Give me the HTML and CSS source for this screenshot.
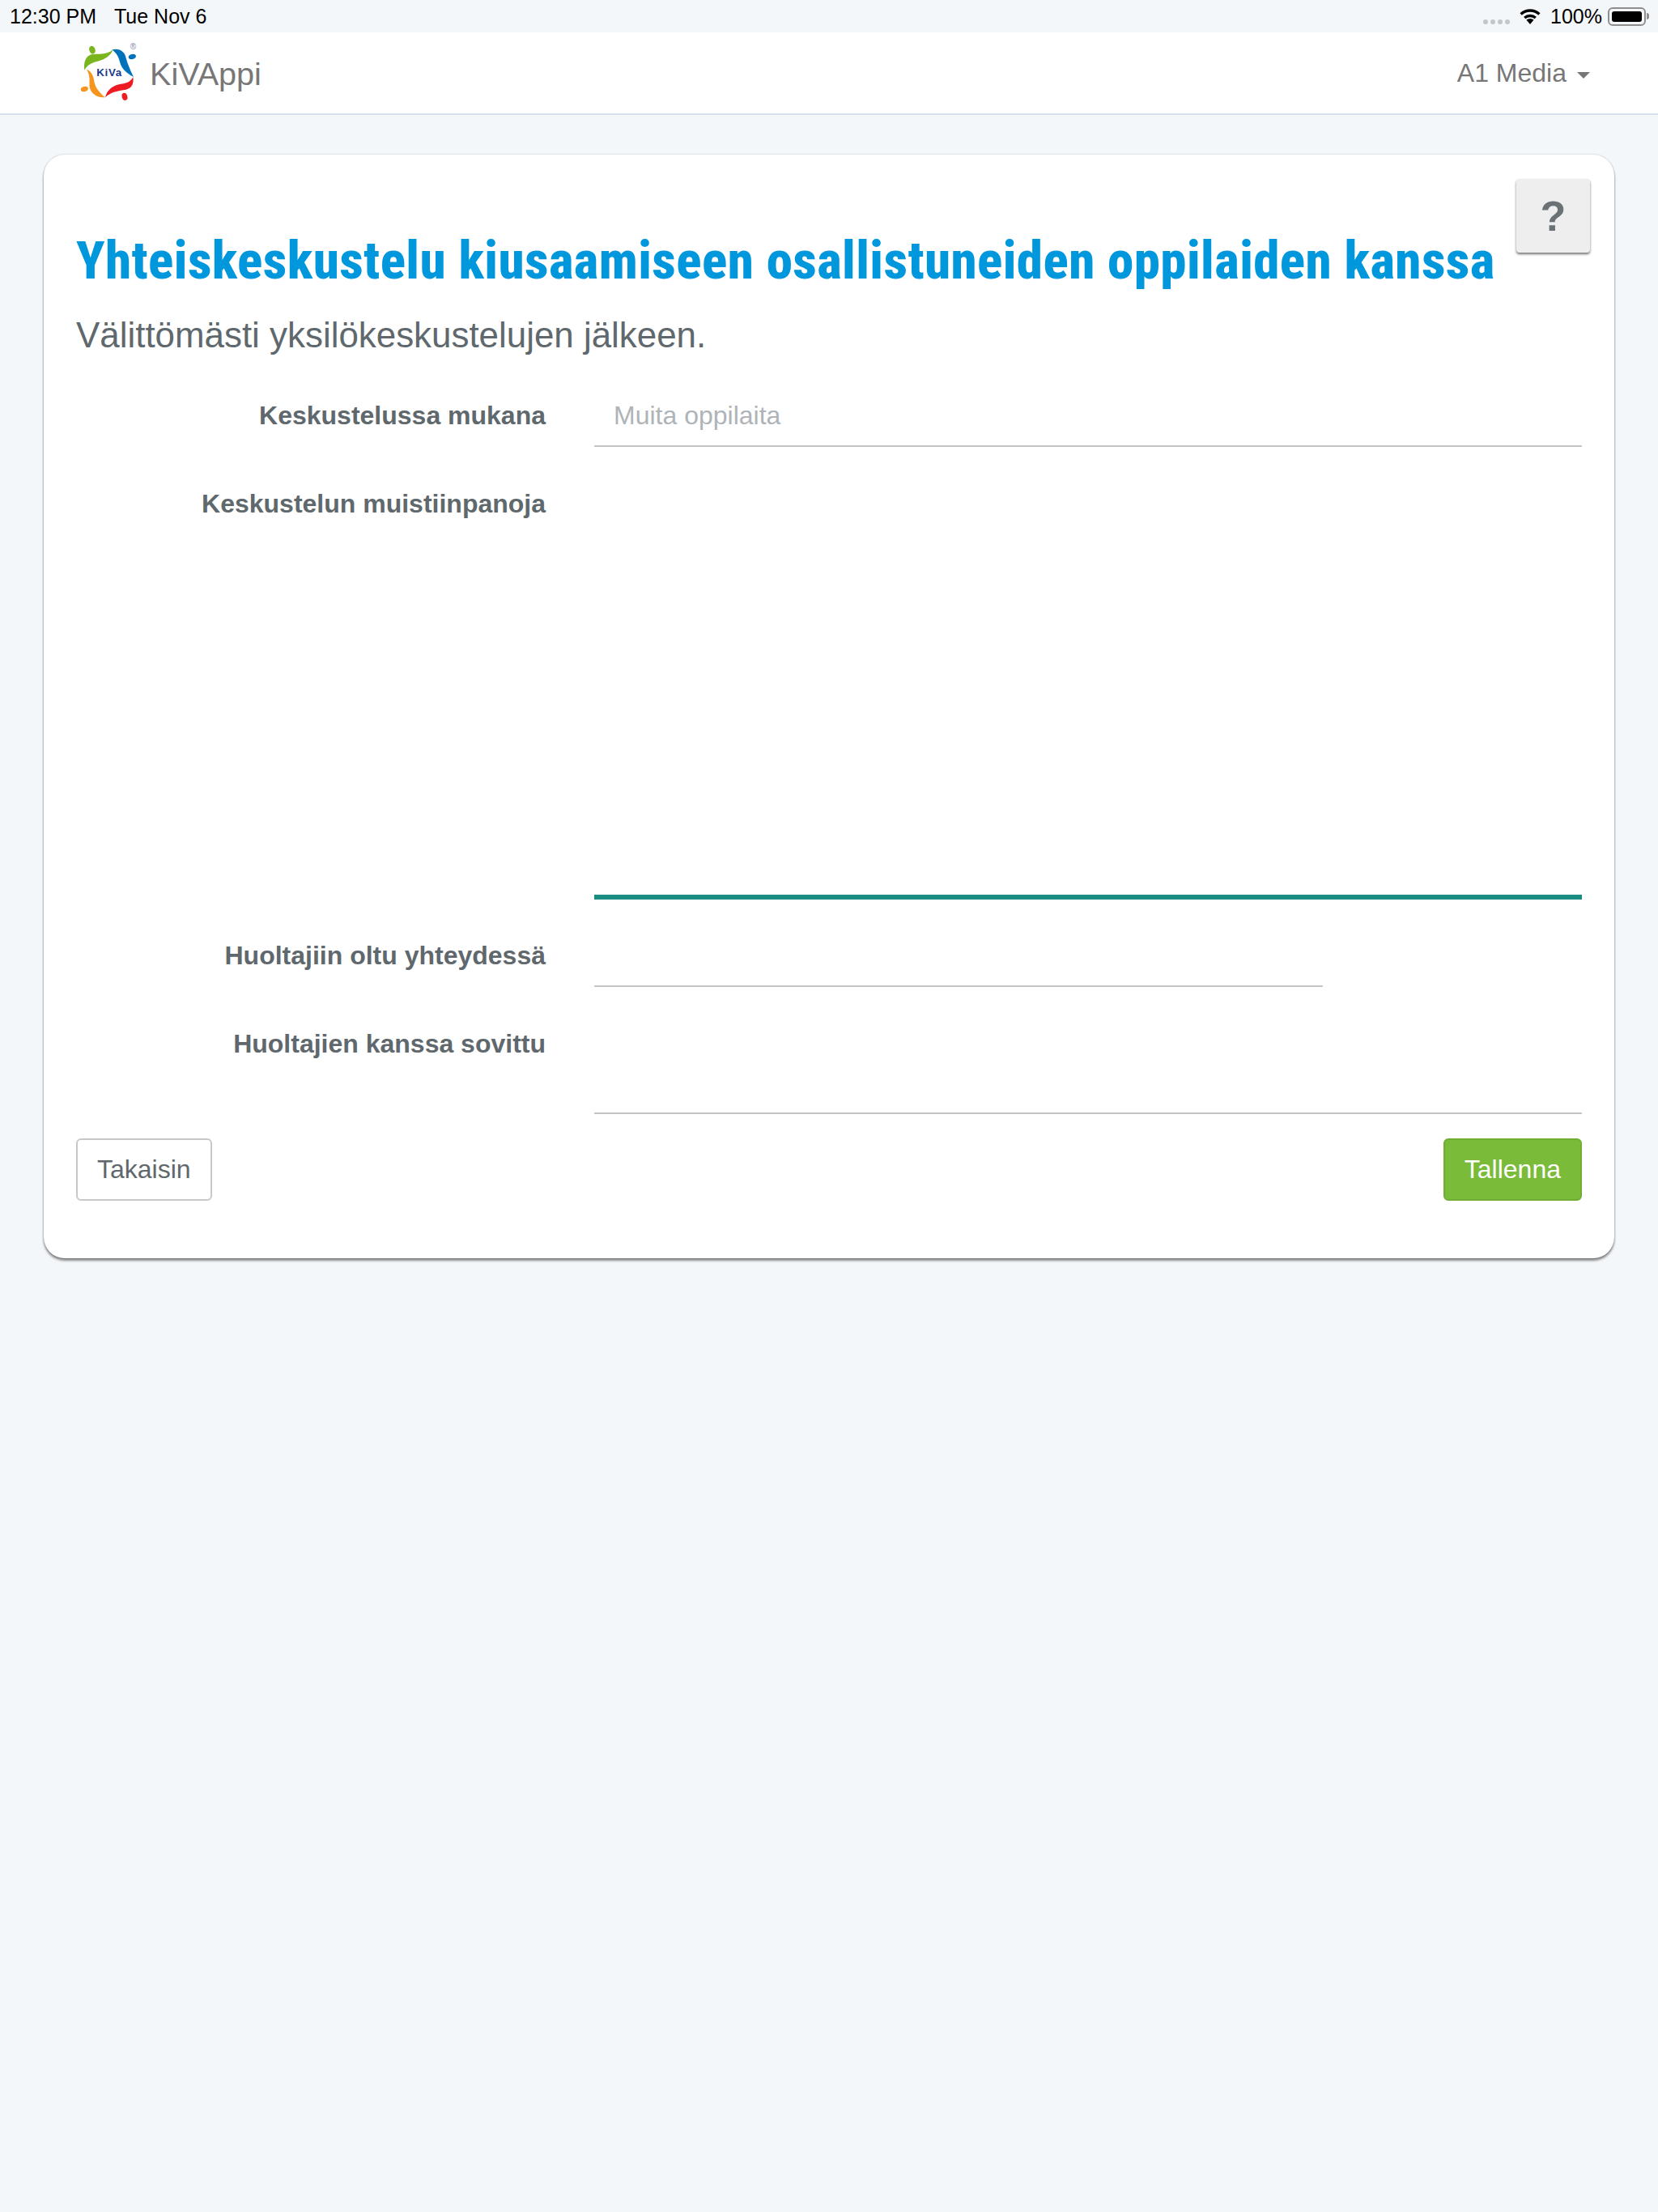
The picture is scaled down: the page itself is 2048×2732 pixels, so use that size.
FILE: index.html
```html
<!DOCTYPE html>
<html lang="fi">
<head>
  <meta charset="UTF-8" />
  <title>KiVAppi</title>
  <link rel="stylesheet" href="styles.css">
</head>

<body>
  <div class="status-bar">
    <div class="status-left">
      <span>12:30 PM</span>
      <span>Tue Nov 6</span>
    </div>
    <div class="status-right">
      <span class="signal"><i></i><i></i><i></i><i></i></span>
      <svg class="wifi" width="28" height="20" viewBox="0 0 28 20">
        <path d="M14 20 L9.4 14.6 A7 7 0 0 1 18.6 14.6 Z" fill="#000"/>
        <path d="M7.2 12 A10.4 10.4 0 0 1 20.8 12" fill="none" stroke="#000" stroke-width="3.4"/>
        <path d="M2.6 7.6 A16.6 16.6 0 0 1 25.4 7.6" fill="none" stroke="#000" stroke-width="3.4"/>
      </svg>
      <span class="percent">100%</span>
      <span class="battery"><span class="battery-fill"></span></span>
      <span class="battery-nub"></span>
    </div>
  </div>

  <header>
    <div class="brand">
      <svg class="logo" width="100" height="100" viewBox="0 0 300 300">
        <ellipse cx="87" cy="65" rx="11" ry="15" transform="rotate(-20 87 65)" fill="#7ab51d"/>
        <path d="M58 140 C54 112 62 88 84 82 C104 78 140 86 164 64 C156 86 134 100 112 106 C88 112 70 118 58 140 Z" fill="#7ab51d"/>
        <ellipse cx="235" cy="90" rx="14" ry="9" transform="rotate(-15 235 90)" fill="#0072bc"/>
        <path d="M160 64 C182 58 203 66 210 88 C216 112 224 132 240 165 C214 152 194 134 188 106 C184 90 176 76 160 64 Z" fill="#0072bc"/>
        <ellipse cx="207" cy="238" rx="10" ry="14" transform="rotate(-15 207 238)" fill="#ed1c24"/>
        <path d="M238 165 C242 194 232 210 202 214 C176 218 152 224 135 241 C140 218 156 202 180 194 C204 188 226 190 238 165 Z" fill="#ed1c24"/>
        <ellipse cx="58" cy="210" rx="14" ry="9" transform="rotate(-15 58 210)" fill="#f7941d"/>
        <path d="M66 137 C85 143 92 165 95 186 C99 206 116 226 135 241 C108 242 88 232 79 210 C72 192 84 165 66 137 Z" fill="#f7941d"/>
        <text class="logo-text" x="150" y="163" text-anchor="middle">KiVa</text>
        <text class="logo-reg" x="238" y="63" text-anchor="middle">®</text>
      </svg>
      <span class="brand-name">KiVAppi</span>
    </div>
    <div class="user-menu">A1 Media <span class="caret"></span></div>
  </header>

  <main>
    <div class="card">
      <button class="help-btn">?</button>
      <h1>Yhteiskeskustelu kiusaamiseen osallistuneiden oppilaiden kanssa</h1>
      <h2>Välittömästi yksilökeskustelujen jälkeen.</h2>

      <form class="talk-form">
        <div class="row">
          <label>Keskustelussa mukana</label>
          <input type="text" class="field" placeholder="Muita oppilaita">
        </div>
        <div class="row">
          <label>Keskustelun muistiinpanoja</label>
          <textarea class="field notes"></textarea>
        </div>
        <div class="row">
          <label>Huoltajiin oltu yhteydessä</label>
          <input type="text" class="field short">
        </div>
        <div class="row">
          <label>Huoltajien kanssa sovittu</label>
          <textarea class="field agreed"></textarea>
        </div>
        <div class="actions">
          <button type="button" class="btn btn-back">Takaisin</button>
          <button type="button" class="btn btn-save">Tallenna</button>
        </div>
      </form>
    </div>
  </main>
</body>
</html>
```

FILE: styles.css
```css
* {
  margin: 0;
  padding: 0;
  box-sizing: border-box;
  font-family: "Liberation Sans", Arial, sans-serif;
}

body {
  background: #f4f7fa;
  color: #5f686d;
  min-height: 100vh;
}

.status-bar {
  display: flex;
  justify-content: space-between;
  align-items: center;
  height: 40px;
  padding: 0 11px 0 12px;
  font-size: 25px;
  color: #000;
}

.status-left {
  display: flex;
  gap: 22px;
}

.status-right {
  display: flex;
  align-items: center;
}

.signal {
  display: flex;
  gap: 3px;
  margin: 14px 11px 0 0;
}

.signal i {
  width: 6px;
  height: 6px;
  border-radius: 50%;
  background: #c4c7ca;
}

.percent {
  margin-left: 11px;
}

.battery {
  display: block;
  width: 47px;
  height: 23px;
  margin-left: 7px;
  padding: 3px;
  border: 2px solid #8e8e8e;
  border-radius: 6px;
}

.battery-fill {
  display: block;
  height: 100%;
  background: #000;
  border-radius: 3px;
}

.battery-nub {
  width: 3px;
  height: 8px;
  margin-left: 1px;
  background: #8e8e8e;
  border-radius: 0 3px 3px 0;
}

header {
  display: flex;
  justify-content: space-between;
  align-items: center;
  height: 102px;
  padding: 0 84px 0 85px;
  background: white;
  border-bottom: 2px solid #d5e0ea;
}

.brand {
  display: flex;
  align-items: center;
}

.logo-text {
  font-size: 40px;
  font-weight: 700;
  fill: #1b3a8c;
  letter-spacing: 2px;
}

.logo-reg {
  font-size: 30px;
  fill: #7c86a8;
}

.brand-name {
  font-size: 39.6px;
  color: #777;
  padding-top: 3px;
}

.user-menu {
  font-size: 32px;
  color: #777;
  display: flex;
  align-items: center;
  gap: 13px;
}

.caret {
  border-top: 8px solid #777;
  border-left: 8px solid transparent;
  border-right: 8px solid transparent;
  margin-top: 6px;
}

main {
  padding: 49px 54px;
}

.card {
  position: relative;
  padding: 93px 40px 71px;
  background: white;
  border-radius: 26px;
  box-shadow: 0 0 2px rgba(0,0,0,0.25), 0 3px 3px rgba(0,0,0,0.45);
}

.help-btn {
  position: absolute;
  top: 30px;
  right: 30px;
  width: 91px;
  height: 91px;
  font-size: 52px;
  font-weight: 700;
  color: #6a7276;
  background: #eee;
  border: none;
  border-radius: 4px;
  box-shadow: 0 2px 3px rgba(0,0,0,0.55);
}

h1 {
  font-family: Roboto, sans-serif;
  font-size: 65px;
  font-stretch: 75%;
  font-weight: 800;
  letter-spacing: 0.43px;
  line-height: 76px;
  color: #0097dd;
  white-space: nowrap;
}

h2 {
  font-size: 43.9px;
  font-weight: 400;
  line-height: 52px;
  margin-top: 28px;
}

.talk-form {
  margin-top: 50px;
}

.row {
  display: grid;
  grid-template-columns: 580px 1220px;
  column-gap: 60px;
  margin-bottom: 46.5px;
}

.row label {
  font-size: 32px;
  font-weight: 700;
  line-height: 46px;
  text-align: right;
}

.field {
  display: block;
  width: 100%;
  height: 62px;
  padding: 0 24px 14px;
  font-size: 32px;
  color: #5f686d;
  background: white;
  border: none;
  border-bottom: 2px solid #c4c4c4;
  border-radius: 0;
  outline: none;
  resize: none;
}

.field::placeholder {
  color: #aeb4b8;
  opacity: 1;
}

.notes {
  height: 512px;
  border-bottom: 6px solid #198e80;
}

.short {
  width: 900px;
}

.agreed {
  height: 110px;
}

.actions {
  display: flex;
  justify-content: space-between;
  margin-top: -16px;
}

.btn {
  height: 77px;
  padding: 0 24px;
  font-size: 32px;
  border-radius: 6px;
}

.btn-back {
  color: #5f686d;
  background: white;
  border: 2px solid #c8c8c8;
}

.btn-save {
  color: white;
  background: #7abb3a;
  border: 2px solid #70ad33;
}
```
